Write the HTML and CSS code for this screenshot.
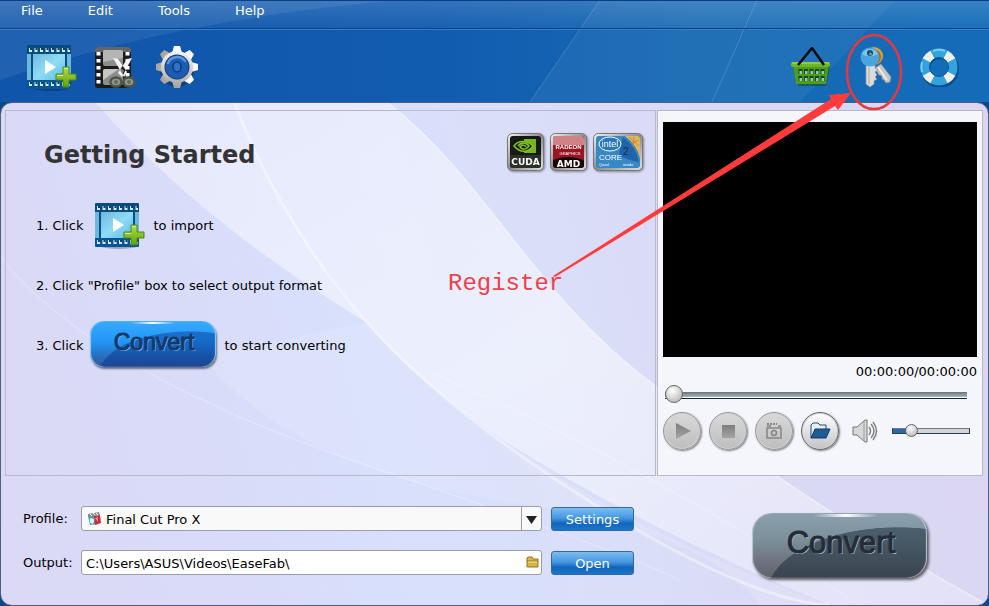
FILE: index.html
```html
<!DOCTYPE html>
<html lang="en">
<head>
    <meta charset="UTF-8">
    <meta name="viewport" content="width=device-width, initial-scale=1.0">
    <title>Video Converter</title>
    <link rel="stylesheet" href="styles.css">
</head>
<body>
    <!-- Shared icon and gradients -->
    <svg class="defs" width="0" height="0" aria-hidden="true">
        <defs>
            <linearGradient id="filmBlue" x1="0" y1="0" x2="0" y2="1">
                <stop offset="0" stop-color="#0b4a7c"/><stop offset="1" stop-color="#075795"/>
            </linearGradient>
            <linearGradient id="filmSky" x1="0" y1="0" x2="1" y2="1">
                <stop offset="0" stop-color="#6cb9dd"/><stop offset=".5" stop-color="#8fdcf6"/><stop offset="1" stop-color="#57bce6"/>
            </linearGradient>
            <linearGradient id="plusGreen" x1="0" y1="0" x2="0" y2="1">
                <stop offset="0" stop-color="#b4de45"/><stop offset="1" stop-color="#5c9f10"/>
            </linearGradient>
            <linearGradient id="silver" gradientUnits="userSpaceOnUse" x1="0" y1="-20" x2="0" y2="20">
                <stop offset="0" stop-color="#ffffff"/><stop offset="1" stop-color="#aaa49e"/>
            </linearGradient>
            <linearGradient id="frameEdge" x1="0" y1="0" x2="1" y2="1">
                <stop offset="0" stop-color="#f4f4f4"/><stop offset=".5" stop-color="#8c8c8c"/><stop offset="1" stop-color="#e6e6e6"/>
            </linearGradient>
            <linearGradient id="playGrey" x1="0" y1="0" x2="0" y2="1">
                <stop offset="0" stop-color="#7c7c7c"/><stop offset="1" stop-color="#a5a5a5"/>
            </linearGradient>
        </defs>
        <symbol id="film-add" viewBox="0 -2 50 48">
            <ellipse cx="24" cy="43" rx="18" ry="3" fill="#000" opacity=".25"/>
            <rect x="0" y="0" width="44" height="44" rx="1" fill="url(#filmBlue)"/>
            <path d="M2 5h41M2 39h41" stroke="#d5effa" stroke-width="4" stroke-dasharray="3 2.500"/>
            <path d="M3 4h41M3 38h41" stroke="#0b3f6b" stroke-width="2" stroke-dasharray="2 3.500"/>
            <rect x="0" y="9" width="4" height="26" fill="#6cb9dd"/>
            <rect x="6" y="9" width="32" height="26" fill="url(#filmSky)"/>
            <rect x="40" y="9" width="4" height="26" fill="#6cb9dd"/>
            <path d="M18 15v14l11-7z" fill="#fff"/>
            <path d="M36 22h6v7h7v6h-7v7h-6v-7h-7v-6h7z" fill="url(#plusGreen)" stroke="#4c8a14"/>
            <path d="M37 23.500h4M30 30.500h6" stroke="#d9f19a"/>
        </symbol>
    </svg>

    <div class="app">
        <header class="header">
            <nav class="menu" aria-label="Main menu">
                <button type="button">File</button>
                <button type="button">Edit</button>
                <button type="button">Tools</button>
                <button type="button">Help</button>
            </nav>
            <div class="toolbar">
                <button type="button" class="tool" aria-label="Add video">
                    <svg width="50" height="48"><use href="#film-add"/></svg>
                </button>
                <button type="button" class="tool" aria-label="Trim video">
                    <svg width="42" height="42" viewBox="1 -1 42 42">
                        <rect x="1" y="0" width="36" height="41" rx="3" fill="#1b1b1b"/>
                        <path d="M1 3a3 3 0 0 1 3-3h30a3 3 0 0 1 3 3v2H1z" fill="#666"/>
                        <path d="M4.500 5v34M33.500 5v34" stroke="#fff" stroke-width="4" stroke-dasharray="3.500 3.500"/>
                        <rect x="9" y="3" width="20" height="16" rx="2" fill="#8d8d8d"/>
                        <path d="M9 5a2 2 0 0 1 2-2h16a2 2 0 0 1 2 2v6L9 15z" fill="#b5b5b5"/>
                        <rect x="9" y="22" width="20" height="16" rx="2" fill="#8d8d8d"/>
                        <path d="M9 24a2 2 0 0 1 2-2h14L9 33z" fill="#c6c6c6"/>
                        <path d="M19 11l5 1 9 13-3 5zM38 11l-5 1-9 14 4 4z" fill="#f6f6f6"/>
                        <circle cx="28.500" cy="24" r="1.500" fill="#777"/>
                        <ellipse cx="22" cy="35" rx="5.500" ry="4.500" fill="#8d998a" stroke="#4b5548" stroke-width="2.500"/>
                        <ellipse cx="35" cy="35" rx="5.500" ry="4.500" fill="#8d998a" stroke="#4b5548" stroke-width="2.500"/>
                        <circle cx="22" cy="35" r="2" fill="#626c5f"/>
                        <circle cx="35" cy="35" r="2" fill="#626c5f"/>
                    </svg>
                </button>
                <button type="button" class="tool" aria-label="Preferences">
                    <svg width="44" height="44" viewBox="-22 -22 44 44">
                        <circle cy="3" r="17" fill="#062a5c" opacity=".5"/>
                        <g fill="url(#silver)">
                            <path d="M-5-14l2-7h6l2 7v28l-2 7h-6l-2-7z"/>
                            <path d="M-5-14l2-7h6l2 7v28l-2 7h-6l-2-7z" transform="rotate(45)"/>
                            <path d="M-5-14l2-7h6l2 7v28l-2 7h-6l-2-7z" transform="rotate(90)"/>
                            <path d="M-5-14l2-7h6l2 7v28l-2 7h-6l-2-7z" transform="rotate(135)"/>
                            <circle r="16"/>
                        </g>
                        <circle r="12.500" fill="#0c3c80"/>
                        <circle r="8" fill="none" stroke="#1d5cb0" stroke-width="7"/>
                        <path d="M-9-4A10 10 0 0 1 8-6" fill="none" stroke="#5c96dc" stroke-width="2.500" stroke-linecap="round"/>
                        <ellipse rx="4" ry="5" fill="#3272c2" stroke="#0a3c84" stroke-width="1.500"/>
                    </svg>
                </button>
                <span class="spacer"></span>
                <button type="button" class="tool" aria-label="Buy">
                    <svg width="40" height="40" viewBox="0 0 40 40">
                        <path d="M3 20h36l-4 19H7z" fill="#123f10" opacity=".45"/>
                        <path d="M2 18h36l-3 19H5z" fill="#4d9d16"/>
                        <rect x="0" y="15" width="39" height="5" rx="2" fill="#6fb52a"/>
                        <path d="M1 16h37" stroke="#b3dc5b"/>
                        <path d="M7.500 24.500h26M7.500 31.500h26" stroke="#0e4d24" stroke-width="5" stroke-dasharray="4 1.500"/>
                        <path d="M8.500 25.500h25M8.500 32.500h25" stroke="#9ec0cc" stroke-width="3" stroke-dasharray="2.500 3"/>
                        <path d="M7 18L21 1l12 17" fill="none" stroke="#0a0a0a" stroke-width="2.500"/>
                    </svg>
                </button>
                <button type="button" class="tool" aria-label="Register">
                    <svg width="34" height="42" viewBox="-2 0 34 42">
                        <circle cx="14" cy="10" r="9" fill="#e8a32c"/>
                        <circle cx="13" cy="11" r="8" fill="#a76711"/>
                        <path d="M15 22l6-4 10 13-1 5-4 1-2-3-2-1v-3l-3-1z" fill="#c4c4c6" stroke="#918f92" stroke-width=".7"/>
                        <path d="M18 21l9 13" stroke="#f2f2f2" stroke-width="1.500"/>
                        <path d="M6 19h9v3l3 2-3 2 2 3-2 2 2 2-3 2v3l-4 3-4-3z" fill="#dcdcdd" stroke="#98989b" stroke-width=".7"/>
                        <path d="M9 21v17" stroke="#a7a7aa"/>
                        <circle cx="10" cy="11" r="9.500" fill="#4aa5de"/>
                        <path d="M2 8a9 9 0 0 1 16 0c-4 3-12 3-16 0z" fill="#7cc5ed"/>
                        <circle cx="10" cy="7" r="3" fill="#174a7a"/>
                        <circle cx="10.500" cy="8" r="1.500" fill="#7e919e"/>
                    </svg>
                </button>
                <button type="button" class="tool" aria-label="Support">
                    <svg width="40" height="40" viewBox="-20 -20 40 40">
                        <circle cx="1" cy="2" r="14.500" fill="none" stroke="#073668" stroke-width="9" opacity=".55"/>
                        <circle r="14" fill="none" stroke="#32a3dc" stroke-width="9"/>
                        <path d="M-6-16A17 17 0 0 1 6-16M-17-5A17 17 0 0 0-17 5" fill="none" stroke="#7bcdf0" stroke-width="2"/>
                        <circle r="14" fill="none" stroke="#f1efeb" stroke-width="9" pathLength="360" stroke-dasharray="34 56" stroke-dashoffset="-28"/>
                        <circle r="9.500" fill="none" stroke="#0d5799" stroke-width="1"/>
                    </svg>
                </button>
            </div>
        </header>

        <main class="body">
            <div class="workspace">
                <section class="panel intro">
                    <div class="intro-top">
                        <h1>Getting Started</h1>
                        <div class="badges">
                            <svg width="37" height="38" viewBox="0 0 37 38" role="img" aria-label="CUDA">
                                <rect x=".5" y=".5" width="36" height="37" rx="5" fill="url(#frameEdge)" stroke="#777"/>
                                <rect x="3" y="3" width="31" height="32" rx="3" fill="#171a14"/>
                                <path d="M3 22h31v10a3 3 0 0 1-3 3H6a3 3 0 0 1-3-3z" fill="#2d3029"/>
                                <rect x="17" y="6" width="12" height="14" fill="#76b51b"/>
                                <path d="M7 13c4-6 13-6 19 0-5 7-13 7-19 0z" fill="#171a14" stroke="#83c524" stroke-width="1.500"/>
                                <path d="M11 13c3-4 8-4 11 0-3 4-7 4-9 1 2-3 5-2 6 0" fill="none" stroke="#83c524" stroke-width="1.500"/>
                                <text x="18.500" y="32" text-anchor="middle" class="badge-name">CUDA</text>
                            </svg>
                            <svg width="37" height="38" viewBox="0 0 37 38" role="img" aria-label="Radeon Graphics AMD">
                                <rect x=".5" y=".5" width="36" height="37" rx="5" fill="url(#frameEdge)" stroke="#777"/>
                                <rect x="3" y="3" width="31" height="32" rx="3" fill="#9a1522"/>
                                <path d="M3 6a3 3 0 0 1 3-3h25a3 3 0 0 1 3 3v6H3z" fill="#cf8388"/>
                                <path d="M3 27q15-6 31 0v5a3 3 0 0 1-3 3H6a3 3 0 0 1-3-3z" fill="#160608"/>
                                <text x="18.500" y="16" text-anchor="middle" class="badge-brand">RADEON</text>
                                <text x="20" y="22" text-anchor="middle" class="badge-tiny">GRAPHICS</text>
                                <text x="18.500" y="34" text-anchor="middle" class="badge-name">AMD</text>
                            </svg>
                            <svg width="50" height="38" viewBox="0 0 50 38" role="img" aria-label="Intel Core 2 Quad inside">
                                <rect x=".5" y=".5" width="49" height="37" rx="5" fill="url(#frameEdge)" stroke="#777"/>
                                <rect x="3" y="3" width="44" height="32" rx="3" fill="#3988c6"/>
                                <path d="M32 3h12a3 3 0 0 1 3 3v19Q44 12 32 3z" fill="#e2b75b"/>
                                <path d="M36 4l10 9M41 4l-1 12M46 7l-9 4" stroke="#bf7d38" stroke-width=".8"/>
                                <path d="M30 4q13 9 16 25-14-2-20-8z" fill="#1f63a8"/>
                                <ellipse cx="17" cy="11" rx="11" ry="7" fill="#2a76b8" stroke="#fff"/>
                                <text x="17" y="14" text-anchor="middle" class="badge-intel">intel</text>
                                <text x="6" y="27" class="badge-core">CORE</text>
                                <text x="30" y="22" class="badge-two">2</text>
                                <text x="6" y="33" class="badge-tiny">Quad</text>
                                <text x="30" y="33" class="badge-tiny">inside</text>
                            </svg>
                        </div>
                    </div>
                    <ol class="steps">
                        <li>
                            <span>1. Click</span>
                            <svg class="step-film" width="50" height="48" aria-hidden="true"><use href="#film-add"/></svg>
                            <span>to import</span>
                        </li>
                        <li><span>2. Click "Profile" box to select output format</span></li>
                        <li>
                            <span>3. Click</span>
                            <button type="button" class="convert convert-small">Convert</button>
                            <span>to start converting</span>
                        </li>
                    </ol>
                </section>

                <section class="panel player">
                    <div class="video"></div>
                    <div class="time">00:00:00/00:00:00</div>
                    <input type="range" class="seek" min="0" max="100" value="0" aria-label="Position">
                    <div class="controls">
                        <button type="button" class="round" aria-label="Play">
                            <svg width="20" height="20" viewBox="0 0 20 20"><path d="M4 2v16l15-8z" fill="url(#playGrey)"/></svg>
                        </button>
                        <button type="button" class="round" aria-label="Stop">
                            <svg width="20" height="20" viewBox="0 0 20 20"><path d="M4 4h13v13H4z" fill="url(#playGrey)"/></svg>
                        </button>
                        <button type="button" class="round" aria-label="Snapshot">
                            <svg width="20" height="20" viewBox="0 0 20 20" fill="none" stroke="#858585">
                                <path d="M3 7h14v10H3zM3 5h4M14 5h3" stroke-width="1.500"/>
                                <path d="M3 3h10" stroke-dasharray="2 1" stroke-width="2"/>
                                <circle cx="10" cy="12" r="2.500" stroke-width="1.500"/>
                            </svg>
                        </button>
                        <button type="button" class="round active" aria-label="Open folder">
                            <svg width="22" height="18" viewBox="0 0 22 18">
                                <path d="M2 16V3l2-2h5l2 2h6v4" fill="#e9eef3" stroke="#1d4c7c"/>
                                <path d="M2 16L6 7h15l-4 9z" fill="#1f5b95" stroke="#123b68"/>
                            </svg>
                        </button>
                        <button type="button" class="mute" aria-label="Mute">
                            <svg width="26" height="24" viewBox="0 0 26 24">
                                <path d="M1 8h4l8-7h2v22h-2l-8-7H1z" fill="#d8d8d8" stroke="#777"/>
                                <path d="M12 2v20" stroke="#999"/>
                                <path d="M17 8q3 4 0 8M19 5q6 7 0 14M21 3q7 9 0 18" fill="none" stroke="#858585" stroke-width="1.500"/>
                            </svg>
                        </button>
                        <input type="range" class="volume" min="0" max="100" value="18" aria-label="Volume">
                    </div>
                </section>
            </div>

            <div class="bottom">
                <form class="output-form">
                    <label for="profile">Profile:</label>
                    <div class="field">
                        <svg class="profile-icon" width="15" height="15" viewBox="0 0 15 15" aria-hidden="true">
                            <path d="M1 5h10v8l-8 1z" fill="#3ba4ad"/>
                            <path d="M3 7l5 1-2 5-3-1z" fill="#d8f0f5"/>
                            <path d="M7 5l6-1 1 8-6 2z" fill="#c52b39"/>
                            <path d="M8 7l3-1v5z" fill="#ee8e86"/>
                            <path d="M1 3l11-2 1 3L1 6z" fill="#8b8b8b"/>
                            <path d="M3 3l2 2M6 2l2 2M9 2l2 2" stroke="#fff"/>
                        </svg>
                        <select id="profile">
                            <option>Final Cut Pro X</option>
                        </select>
                    </div>
                    <button type="button" class="blue-btn">Settings</button>

                    <label for="output">Output:</label>
                    <div class="field">
                        <input type="text" id="output" value="C:\Users\ASUS\Videos\EaseFab\">
                        <button type="button" class="browse" aria-label="Browse">
                            <svg width="13" height="12" viewBox="0 0 13 12">
                                <path d="M1 11V2l1-1h4l1 2h5v8z" fill="#d9b347" stroke="#97741c"/>
                                <path d="M1 5h11" stroke="#97741c"/><path d="M2 6h9" stroke="#f7e39a"/>
                            </svg>
                        </button>
                    </div>
                    <button type="button" class="blue-btn">Open</button>
                </form>
                <button type="button" class="convert convert-large">Convert</button>
            </div>
        </main>

        <!-- Callout pointing at the register button -->
        <svg class="callout" viewBox="0 0 989 606" preserveAspectRatio="none" aria-hidden="true">
            <ellipse cx="874" cy="72" rx="27" ry="37" fill="none" stroke="#e8383d" stroke-width="2.500"/>
            <path d="M553 276L831 99l-2-4 22-2-13 17-3-4L555 277z" fill="#ff3b3b"/>
            <text x="448" y="290" class="callout-text">Register</text>
        </svg>
    </div>
</body>
</html>
```
FILE: styles.css
```css
* {
    box-sizing: border-box;
}
body {
    margin: 0;
    font-family: "DejaVu Sans", Verdana, sans-serif;
    font-size: 13px;
    color: #000;
}
button, input, select {
    font: inherit;
    color: inherit;
}
button {
    padding: 0;
    border: none;
    background: none;
    cursor: pointer;
}
svg {
    display: block;
}
.defs {
    position: absolute;
}
.app {
    position: relative;
    display: flex;
    flex-direction: column;
    min-height: 100vh;
    background: #0c4789;
}

/* Header */
.header {
    background:
        url("data:image/svg+xml,%3Csvg xmlns='http://www.w3.org/2000/svg' viewBox='0 0 989 102' preserveAspectRatio='none'%3E%3Cpath d='M0 0H400Q180 18 0 80z' fill='%23fff' opacity='.07'/%3E%3Cpath d='M600 0H895L800 102H530z' fill='%23fff' opacity='.05'/%3E%3Cpath d='M600 0L530 102M757 0L712 102' stroke='%23fff' opacity='.15'/%3E%3C/svg%3E") 0 0 / 100% 100% no-repeat,
        linear-gradient(90deg, #1055ab, #125cb0 45%, #1669b3 70%, #146cb9);
}
.menu {
    display: flex;
    gap: 45px;
    height: 29px;
    padding: 0 21px;
    align-items: flex-start;
    border-top: 1px solid #0b3d87;
    border-bottom: 1px solid #0b4390;
    background: linear-gradient(rgba(255, 255, 255, 0.14), rgba(255, 255, 255, 0.03));
}
.menu button {
    height: 18px;
    color: #fff;
}
.toolbar {
    display: flex;
    align-items: center;
    gap: 18px;
    height: 73px;
    padding: 1px 30px 0 27px;
    border-top: 1px solid #3c7cc2;
}
.spacer {
    flex: 1;
}
.tool:nth-last-child(-n+2) {
    margin-left: 9px;
}

/* Main area */
.body {
    flex: 1;
    display: flex;
    flex-direction: column;
    padding: 7px 5px 0 4px;
    border: 1px solid #4f6080;
    border-radius: 12px;
    background:
        url("data:image/svg+xml,%3Csvg xmlns='http://www.w3.org/2000/svg' viewBox='0 0 989 504' preserveAspectRatio='none'%3E%3Cdefs%3E%3ClinearGradient id='a' x1='0' y1='0' x2='1' y2='1'%3E%3Cstop stop-color='%23fff' stop-opacity='.35'/%3E%3Cstop offset='.5' stop-color='%23fff' stop-opacity='.5'/%3E%3Cstop offset='1' stop-color='%23fff' stop-opacity='.25'/%3E%3C/linearGradient%3E%3C/defs%3E%3Cpath d='M95 0Q200 120 366 220Q410 275 505 340Q650 430 830 504H989Q800 400 657 285C530 190 490 80 388 0z' fill='url(%23a)'/%3E%3Cpath d='M200 255Q300 370 505 400T760 504H830Q640 435 505 340Q420 285 366 220z' fill='%23fff' opacity='.12'/%3E%3Cg fill='none' stroke='%23fff' opacity='.4'%3E%3Cpath d='M234 0Q280 120 362 215T598 405T830 504' stroke-width='3'/%3E%3Cpath d='M388 0C490 80 530 190 657 285Q800 400 989 504' stroke-width='1.500'/%3E%3Cpath d='M0 155Q90 270 370 365T680 480' opacity='.7'/%3E%3Cpath d='M430 270Q660 370 860 504' opacity='.7'/%3E%3C/g%3E%3C/svg%3E") 0 0 / 100% 100% no-repeat,
        linear-gradient(75deg, #dbd9f5 0%, #d9dbf8 20%, #d8e0fc 38%, #dadff9 55%, #dad9f5 75%, #dbd5f0 100%);
}
.workspace {
    display: grid;
    grid-template-columns: minmax(0, 2fr) minmax(0, 1fr);
    gap: 1px;
}
.panel {
    border: 1px solid #b9b9c6;
}
.intro {
    padding: 22px 12px 0 30px;
}
.intro-top {
    display: flex;
    justify-content: space-between;
    align-items: flex-start;
}
h1 {
    margin: 3px 0 0 8px;
    font-size: 24px;
    line-height: 38px;
    color: #333;
}
.badges {
    display: flex;
    gap: 6px;
    filter: drop-shadow(1px 1px 1px rgba(0, 0, 0, 0.4));
}
.badges text {
    fill: #fff;
    font-family: "Liberation Sans", Arial, sans-serif;
}
.badges .badge-name {
    font-family: "DejaVu Sans", Verdana, sans-serif;
    font-size: 9px;
    font-weight: bold;
}
.badges .badge-brand {
    font-size: 6px;
    font-weight: bold;
}
.badges .badge-tiny {
    font-size: 4px;
}
.badges .badge-intel {
    font-size: 9px;
}
.badges .badge-core {
    font-size: 8px;
}
.badges .badge-two {
    font-size: 10px;
    fill: #102f60;
}
.steps {
    margin: 21px 0 0;
    padding: 0;
    list-style: none;
}
.steps li {
    display: flex;
    align-items: center;
    height: 60px;
}
.step-film {
    margin: 0 9px 0 11px;
}

/* Player */
.player {
    display: flex;
    flex-direction: column;
    padding: 11px 5px 25px;
    background: #f4f6fc;
}
.video {
    aspect-ratio: 4 / 3;
    background: #000;
}
.time {
    margin-top: 5px;
    line-height: 20px;
    text-align: right;
}
.seek,
.volume {
    appearance: none;
    background: transparent;
}
.seek {
    height: 20px;
    margin: 3px 10px 7px 2px;
}
.seek::-webkit-slider-runnable-track {
    height: 7px;
    border-bottom: 1px solid #0f2638;
    background: linear-gradient(#66757f, #a5b1b7 80%, #fff 81%);
}
.seek::-webkit-slider-thumb {
    appearance: none;
    width: 18px;
    height: 18px;
    margin-top: -7px;
    border: 1px solid #666;
    border-radius: 50%;
    background: radial-gradient(circle at 40% 30%, #fff, #aaa);
}
.controls {
    display: flex;
    align-items: center;
    gap: 8px;
}
.round {
    display: grid;
    place-items: center;
    flex: none;
    width: 38px;
    height: 38px;
    border: 1px solid #999;
    border-radius: 50%;
    background: linear-gradient(#d9d9d9, #bebebe);
    box-shadow: inset 0 0 0 1px #d2d2d2, 1px 1px 2px rgba(0, 0, 0, 0.5);
}
.round.active {
    border-color: #666;
    background: linear-gradient(#fff, #c4c4c8);
}
.mute {
    margin: 0 6px 0 5px;
}
.volume {
    flex: 1;
    width: 0;
    height: 16px;
    margin: 0 7px 0 0;
}
.volume::-webkit-slider-runnable-track {
    height: 6px;
    border: 1px solid #283c50;
    border-top-color: #777;
    background: linear-gradient(90deg, #2a69ad 22%, #cfd3dc 22%);
}
.volume::-webkit-slider-thumb {
    appearance: none;
    width: 13px;
    height: 13px;
    margin-top: -5px;
    border: 1px solid #666;
    border-radius: 50%;
    background: radial-gradient(circle at 40% 30%, #fff, #aaa);
}

/* Bottom area */
.bottom {
    display: flex;
    justify-content: space-between;
    align-items: flex-start;
    gap: 118px;
    padding: 30px 56px 27px 18px;
}
.output-form {
    flex: 1;
    display: grid;
    grid-template-columns: 49px 1fr 83px;
    gap: 19px 9px;
    align-items: center;
}
.field {
    position: relative;
    display: flex;
}
.field select,
.field input {
    width: 100%;
    height: 25px;
    padding: 1px 24px 0 4px;
    border: 1px solid #9a9da8;
    border-radius: 3px;
    background: #fff;
}
.field select {
    appearance: none;
    padding-left: 24px;
    background:
        url("data:image/svg+xml,%3Csvg xmlns='http://www.w3.org/2000/svg' width='20' height='23'%3E%3Cpath d='M.5 0v23' stroke='%239a9da8'/%3E%3Cpath d='M5 9h11l-5.500 8z' fill='%23222'/%3E%3C/svg%3E") right center no-repeat,
        #f9f9fa;
}
.profile-icon {
    position: absolute;
    left: 6px;
    top: 5px;
}
.browse {
    position: absolute;
    right: 3px;
    top: 6px;
}
.blue-btn {
    height: 24px;
    padding-top: 1px;
    border: 1px solid #36699f;
    border-radius: 3px;
    background: linear-gradient(#7cbcf2, #4698e0 45%, #1266bc 70%, #1b75cc);
    color: #fff;
}
.convert {
    font-family: "Liberation Sans", Arial, sans-serif;
    color: #14396b;
}
.convert-small {
    width: 126px;
    height: 46px;
    margin: 0 9px 2px 6px;
    padding: 0 0 4px 3px;
    border-radius: 14px;
    font-size: 23px;
    -webkit-text-stroke: 1px #14396b;
    text-shadow: 1px 1px 0 #79b7f0;
    background:
        linear-gradient(90deg, transparent, #fff, transparent) 50% 1px / 44px 2px no-repeat,
        radial-gradient(ellipse 92px 44px at 100px 54px, rgba(0, 40, 130, 0.4) 98%, transparent 100%),
        linear-gradient(#3aaaff, #2196f7 45%, #2a6ab8 80%, #3158a0);
    box-shadow: inset 1px 0 1px #8fd0ff, inset -1px 0 1px #8fd0ff, 1px 2px 2px rgba(0, 0, 0, 0.5);
}
.convert-large {
    flex: none;
    width: 175px;
    height: 65px;
    margin-top: 7px;
    padding: 0 0 6px 3px;
    border-radius: 20px;
    font-size: 31px;
    color: #242c38;
    -webkit-text-stroke: 1px #242c38;
    text-shadow: 1px 1px 0 #b7c3cc;
    background:
        linear-gradient(90deg, transparent, #fff, transparent) 56% 1px / 64px 3px no-repeat,
        radial-gradient(ellipse 132px 68px at 146px 82px, rgba(20, 38, 52, 0.5) 99%, transparent 100%),
        linear-gradient(#8ba0ad, #7d909c 40%, #6b6f79 80%, #60636e);
    box-shadow: inset 1px 0 1px #bccbd4, inset -1px 0 1px #bccbd4, 2px 2px 3px rgba(0, 0, 0, 0.6);
}

/* Callout */
.callout {
    position: absolute;
    top: 0;
    left: 0;
    width: 100%;
    height: 100%;
    pointer-events: none;
}
.callout-text {
    font-family: "Liberation Mono", monospace;
    font-size: 24px;
    fill: #f04048;
}
```
